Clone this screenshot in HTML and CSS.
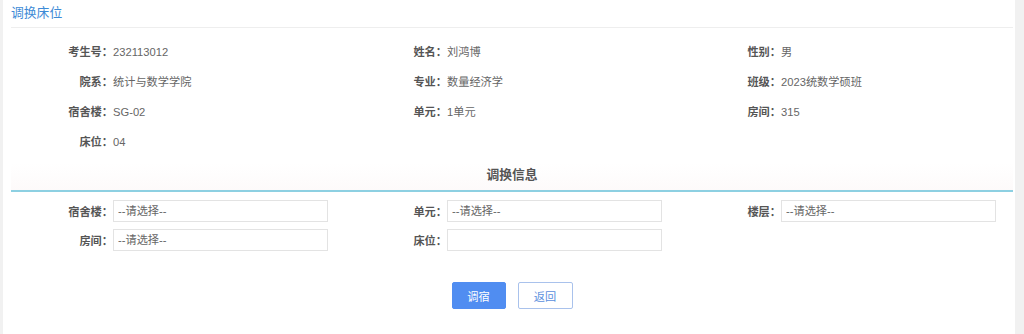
FILE: index.html
```html
<!DOCTYPE html>
<html lang="zh-CN">
<head>
<meta charset="utf-8">
<title>调换床位</title>
<link rel="stylesheet" href="styles.css">
</head>
<body>
<div class="card">
  <div class="page-title">调换床位</div>

  <div class="info-grid">
    <div class="field"><span class="label">考生号：</span><span class="value">232113012</span></div>
    <div class="field"><span class="label">姓名：</span><span class="value">刘鸿博</span></div>
    <div class="field"><span class="label">性别：</span><span class="value">男</span></div>
    <div class="field"><span class="label">院系：</span><span class="value">统计与数学学院</span></div>
    <div class="field"><span class="label">专业：</span><span class="value">数量经济学</span></div>
    <div class="field"><span class="label">班级：</span><span class="value">2023统数学硕班</span></div>
    <div class="field"><span class="label">宿舍楼：</span><span class="value">SG-02</span></div>
    <div class="field"><span class="label">单元：</span><span class="value">1单元</span></div>
    <div class="field"><span class="label">房间：</span><span class="value">315</span></div>
    <div class="field"><span class="label">床位：</span><span class="value">04</span></div>
  </div>

  <div class="section-title">调换信息</div>

  <div class="form-grid">
    <div class="form-field"><span class="label">宿舍楼：</span><select class="picker"><option>--请选择--</option></select></div>
    <div class="form-field"><span class="label">单元：</span><select class="picker"><option>--请选择--</option></select></div>
    <div class="form-field"><span class="label">楼层：</span><select class="picker"><option>--请选择--</option></select></div>
    <div class="form-field"><span class="label">房间：</span><select class="picker"><option>--请选择--</option></select></div>
    <div class="form-field"><span class="label">床位：</span><select class="picker"></select></div>
  </div>

  <div class="actions">
    <button class="btn btn-primary">调宿</button>
    <button class="btn btn-default">返回</button>
  </div>
</div>
</body>
</html>
```

FILE: styles.css
```css
html, body {
  margin: 0;
  padding: 0;
}
body {
  background: #f1f1f1;
  font-family: "Liberation Sans", "Noto Sans CJK SC", sans-serif;
  font-size: 11.2px;
  color: #666;
}
.card {
  margin-left: 3px;
  width: 1012px;
  min-height: 334px;
  box-sizing: border-box;
  padding: 0 2px 0 8px;
  background: #fff;
}
.page-title {
  padding: 3px 0 4px;
  line-height: 20px;
  font-size: 12.8px;
  color: #3d8ad6;
  border-bottom: 1px solid #eeeeee;
}
.info-grid {
  margin-top: 9px;
  display: grid;
  grid-template-columns: repeat(3, 334px);
}
.field {
  display: flex;
  line-height: 30px;
}
.label {
  width: 102px;
  flex: none;
  text-align: right;
  font-weight: bold;
  color: #555;
}
.value {
  color: #666;
}
.section-title {
  margin-top: 6px;
  padding-bottom: 3px;
  line-height: 24px;
  text-align: center;
  font-size: 12.8px;
  font-weight: bold;
  color: #555;
  border-bottom: 2px solid #8dd0e2;
  background: linear-gradient(#ffffff, #fdfafa);
}
.form-grid {
  margin-top: 8px;
  display: grid;
  grid-template-columns: repeat(3, 334px);
  row-gap: 7px;
}
.form-field {
  display: flex;
  align-items: center;
}
.picker {
  -webkit-appearance: none;
  appearance: none;
  width: 215px;
  height: 22px;
  box-sizing: border-box;
  margin: 0;
  padding: 0 4px;
  border: 1px solid #e3e3e3;
  border-radius: 0;
  background: #fff;
  font-family: "Liberation Sans", "Noto Sans CJK SC", sans-serif;
  font-size: 11.2px;
  color: #666;
}
.actions {
  margin-top: 31px;
  display: flex;
  justify-content: center;
  gap: 12px;
}
.btn {
  width: 54px;
  height: 27px;
  box-sizing: border-box;
  border-radius: 2px;
  font-family: "Liberation Sans", "Noto Sans CJK SC", sans-serif;
  font-size: 11.2px;
  padding: 0;
  cursor: pointer;
}
.btn-primary {
  background: #508df1;
  border: 1px solid #508df1;
  color: #fff;
}
.btn-default {
  width: 55px;
  background: #fff;
  border: 1px solid #a9c2ec;
  color: #5b8fdd;
}
```
